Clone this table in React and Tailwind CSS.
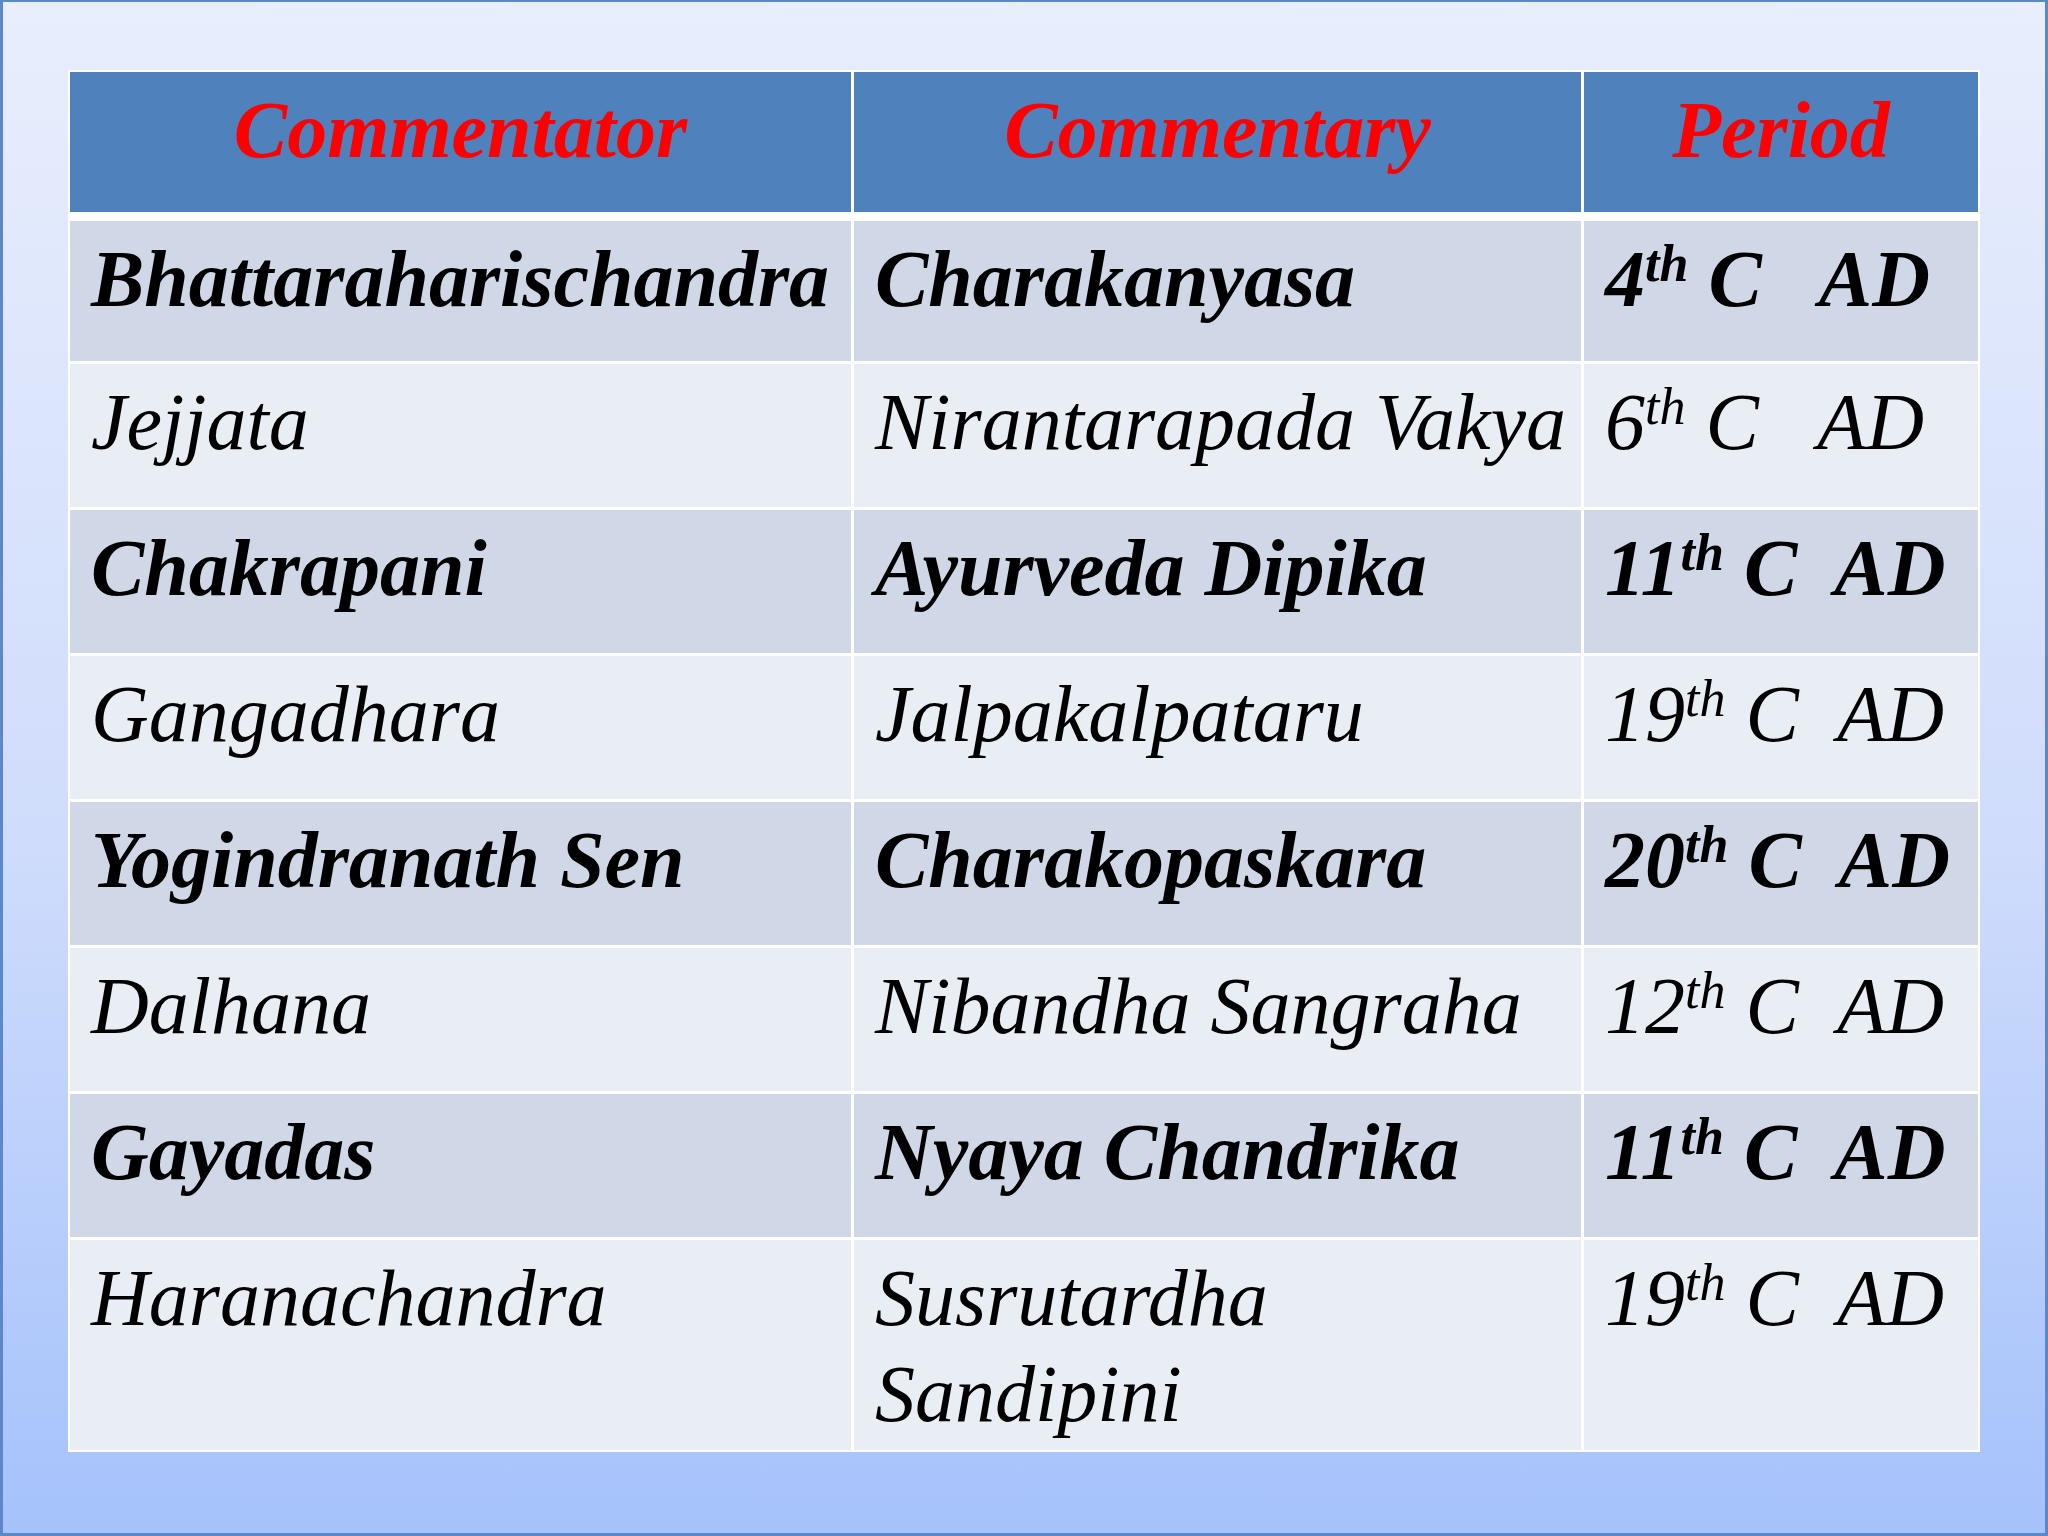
const rows = [
  { bold: true, name: "Bhattaraharischandra", work: ["Charakanyasa"], num: "4", gap: "   " },
  { bold: false, name: "Jejjata", work: ["Nirantarapada Vakya"], num: "6", gap: "   " },
  { bold: true, name: "Chakrapani", work: ["Ayurveda Dipika"], num: "11", gap: "  " },
  { bold: false, name: "Gangadhara", work: ["Jalpakalpataru"], num: "19", gap: "  " },
  { bold: true, name: "Yogindranath Sen", work: ["Charakopaskara"], num: "20", gap: "  " },
  { bold: false, name: "Dalhana", work: ["Nibandha Sangraha"], num: "12", gap: "  " },
  { bold: true, name: "Gayadas", work: ["Nyaya Chandrika"], num: "11", gap: "  " },
  { bold: false, name: "Haranachandra", work: ["Susrutardha", "Sandipini"], num: "19", gap: "  " },
];

const rowHeights = ["h-[140px]", "h-[143px]", "h-[143px]", "h-[143px]", "h-[143px]", "h-[143px]", "h-[143px]", "h-[210px]"];

function HeaderCell({ children }) {
  return (
    <div className="mb-[6px] h-[140px] bg-[#4f81bd] pt-[10px] text-center text-[80px] leading-[96px] font-bold text-[#ff0000]">
      {children}
    </div>
  );
}

function Cell({ bold, height, children }) {
  return (
    <div
      className={`${height} ${bold ? "bg-[#d0d8e8] font-bold" : "bg-[#e9edf4] font-normal"} whitespace-pre pl-[21px] pt-[10px] text-[80px] leading-[96px] text-black`}
    >
      {children}
    </div>
  );
}

export default function App() {
  return (
    <div className="h-[1536px] w-full border-l-[3px] border-t-2 border-r-[3px] border-b-[3px] border-[#5a88c9] bg-linear-to-b from-[#e8eefc] via-[#cfdcfb] via-55% to-[#a5c2fb] pl-[65px] pt-[68px] font-['Liberation_Serif',serif] italic">
      <div className="grid w-[1912px] grid-cols-[781px_727px_394px] gap-[3px] bg-white p-[2px]">
        <HeaderCell>Commentator</HeaderCell>
        <HeaderCell>Commentary</HeaderCell>
        <HeaderCell>Period</HeaderCell>

        {rows.map((row, i) => [
          <Cell key={`${i}-a`} bold={row.bold} height={rowHeights[i]}>
            {row.name}
          </Cell>,
          <Cell key={`${i}-b`} bold={row.bold} height={rowHeights[i]}>
            {row.work.map((line, j) => (
              <div key={j}>{line}</div>
            ))}
          </Cell>,
          <Cell key={`${i}-c`} bold={row.bold} height={rowHeights[i]}>
            {row.num}
            <span className="align-[25px] text-[52px] leading-none">th</span>
            {` C${row.gap}AD`}
          </Cell>,
        ])}
      </div>
    </div>
  );
}
